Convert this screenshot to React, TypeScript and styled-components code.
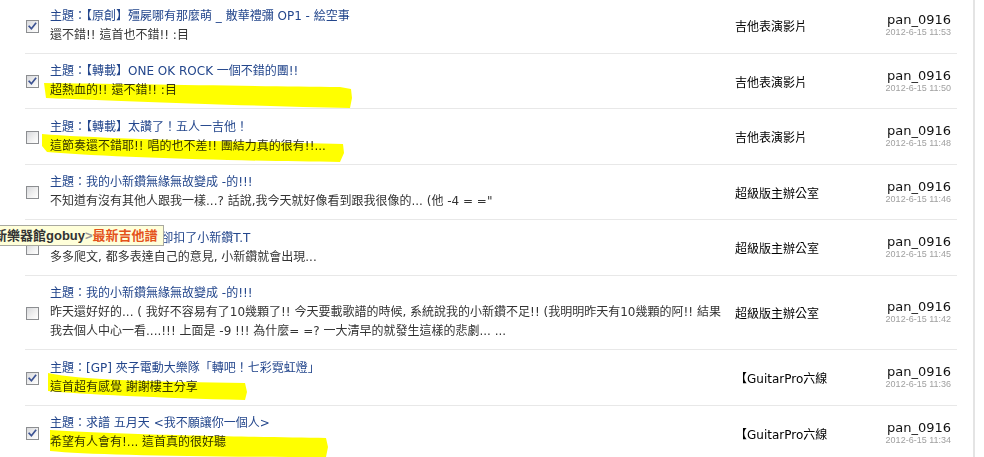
import React from "react";
import styled, { createGlobalStyle } from "styled-components";

const GlobalStyle = createGlobalStyle`
  html, body { margin: 0; padding: 0; background: #ffffff; }
  body {
    font-family: "DejaVu Sans", "Noto Sans CJK TC", sans-serif;
    overflow: hidden;
  }
`;

const Page = styled.div`
  position: relative;
  width: 984px;
  height: 457px;
  overflow: hidden;
  display: flex;
  background: #fff;
`;

const Main = styled.div`
  flex: 0 0 975px;
  border-right: 2px solid #e4e4e4;
  padding-left: 25px;
  box-sizing: border-box;
`;

const List = styled.div`
  width: 932px;
  margin-top: -2px;
`;

const Row = styled.div`
  position: relative;
  display: grid;
  grid-template-columns: 25px 685px 1fr auto;
  align-items: center;
  padding: 8.5px 6px 8px 0;
  border-bottom: 1px solid #e8e8e8;
`;

const CheckBox = styled.span`
  display: block;
  width: 13px;
  height: 13px;
  margin-left: 1px;
  margin-top: 1px;
  box-sizing: border-box;
  border: 1px solid #8c8e91;
  background: linear-gradient(135deg, #d8d9dc 0%, #f2f2f2 60%, #ffffff 100%);
  position: relative;
  svg { position: absolute; left: 0; top: 0; }
`;

const TextCell = styled.div`
  font-size: 12px;
  line-height: 19px;
`;

const Title = styled.div`
  color: #23468c;
  white-space: nowrap;
`;

const Sub = styled.div`
  color: #333333;
  white-space: nowrap;
`;

const Category = styled.div`
  font-size: 12px;
  color: #000;
  white-space: nowrap;
`;

const Author = styled.div`
  text-align: right;
`;

const Name = styled.div`
  font-size: 13px;
  line-height: 14px;
  color: #111;
`;

const Time = styled.div`
  font-family: "Liberation Sans", sans-serif;
  font-size: 9px;
  line-height: 11px;
  color: #a0a0a0;
`;

const Tip = styled.div`
  position: absolute;
  left: -35px;
  top: 5px;
  z-index: 3;
  height: 21px;
  box-sizing: border-box;
  padding: 0 5px 0 3px;
  background: #ffffd9;
  border: 1px solid #a9a9a0;
  font-size: 13px;
  font-weight: bold;
  line-height: 19px;
  white-space: nowrap;
  color: #333;
`;

const TipLatin = styled.span<{ $c: string }>`
  font-family: "Liberation Sans", sans-serif;
  color: ${(p) => p.$c};
`;

const TipHot = styled.span`
  color: #e4521b;
`;

const Marker = styled.svg`
  position: absolute;
  left: 0;
  top: 0;
  z-index: 2;
  pointer-events: none;
  mix-blend-mode: multiply;
`;

type RowData = {
  checked: boolean;
  title: string;
  sub: string[];
  cat: string;
  time: string;
  tip?: boolean;
};

const rows: RowData[] = [
  {
    checked: true,
    title: "【原創】殭屍哪有那麼萌 _ 散華禮彌 OP1 - 絵空事",
    sub: ["還不錯!! 這首也不錯!! :目"],
    cat: "吉他表演影片",
    time: "2012-6-15 11:53",
  },
  {
    checked: true,
    title: "【轉載】ONE OK ROCK 一個不錯的團!!",
    sub: ["超熱血的!! 還不錯!! :目"],
    cat: "吉他表演影片",
    time: "2012-6-15 11:50",
  },
  {
    checked: false,
    title: "【轉載】太讚了！五人一吉他！",
    sub: ["這節奏還不錯耶!! 唱的也不差!! 團結力真的很有!!..."],
    cat: "吉他表演影片",
    time: "2012-6-15 11:48",
  },
  {
    checked: false,
    title: "我的小新鑽無緣無故變成 -的!!!",
    sub: ["不知道有沒有其他人跟我一樣...? 話說,我今天就好像看到跟我很像的... (他 -4 = =\""],
    cat: "超級版主辦公室",
    time: "2012-6-15 11:46",
  },
  {
    checked: false,
    title: "我的小新鑽....卻扣了小新鑽T.T",
    sub: ["多多爬文, 都多表達自己的意見, 小新鑽就會出現..."],
    cat: "超級版主辦公室",
    time: "2012-6-15 11:45",
    tip: true,
  },
  {
    checked: false,
    title: "我的小新鑽無緣無故變成 -的!!!",
    sub: [
      "昨天還好好的... ( 我好不容易有了10幾顆了!! 今天要載歌譜的時候, 系統說我的小新鑽不足!! (我明明昨天有10幾顆的阿!! 結果",
      "我去個人中心一看....!!! 上面是 -9 !!! 為什麼= =? 一大清早的就發生這樣的悲劇... ...",
    ],
    cat: "超級版主辦公室",
    time: "2012-6-15 11:42",
  },
  {
    checked: true,
    title: "[GP] 夾子電動大樂隊「轉吧！七彩霓虹燈」",
    sub: ["這首超有感覺 謝謝樓主分享"],
    cat: "【GuitarPro六線",
    time: "2012-6-15 11:36",
  },
  {
    checked: true,
    title: "求譜 五月天 <我不願讓你一個人>",
    sub: ["希望有人會有!... 這首真的很好聽"],
    cat: "【GuitarPro六線",
    time: "2012-6-15 11:34",
  },
];

const Check = () => (
  <svg width="11" height="11" viewBox="0 0 11 11">
    <path d="M2.2 5.4 L4.4 7.8 L8.6 2.4" fill="none" stroke="#3c5393" strokeWidth="1.7" strokeLinecap="square" />
  </svg>
);

const highlights = [
  "M44,83 C120,84 250,86 340,87 L351,89 L352,98 L350,108 C250,106 120,101 46,98 Z",
  "M42,134 C100,139 250,142 343,144 L344,153 L340,162 C250,161 120,158 47,152 L42,146 Z",
  "M48,373 C80,380 160,382 245,383 L247,392 L245,400 C160,398 80,394 48,391 Z",
  "M50,430 C100,434 250,437 326,438 L328,447 L326,457 C200,457 90,455 50,451 Z",
];

export default function App() {
  return (
    <>
      <GlobalStyle />
      <Page>
        <Main>
          <List>
            {rows.map((r, i) => (
              <Row key={i}>
                <CheckBox>{r.checked && <Check />}</CheckBox>
                <TextCell>
                  <Title>主題：{r.title}</Title>
                  {r.sub.map((s, j) => (
                    <Sub key={j}>{s}</Sub>
                  ))}
                </TextCell>
                <Category>{r.cat}</Category>
                <Author>
                  <Name>pan_0916</Name>
                  <Time>{r.time}</Time>
                </Author>
                {r.tip && (
                  <Tip>
                    新樂器館<TipLatin $c="#333">gobuy</TipLatin>
                    <TipLatin $c="#9a9a9a">&gt;</TipLatin>
                    <TipHot>最新吉他譜</TipHot>
                  </Tip>
                )}
              </Row>
            ))}
          </List>
        </Main>
        <Marker width="984" height="457" viewBox="0 0 984 457">
          {highlights.map((d, i) => (
            <path key={i} d={d} fill="#ffff00" />
          ))}
        </Marker>
      </Page>
    </>
  );
}
